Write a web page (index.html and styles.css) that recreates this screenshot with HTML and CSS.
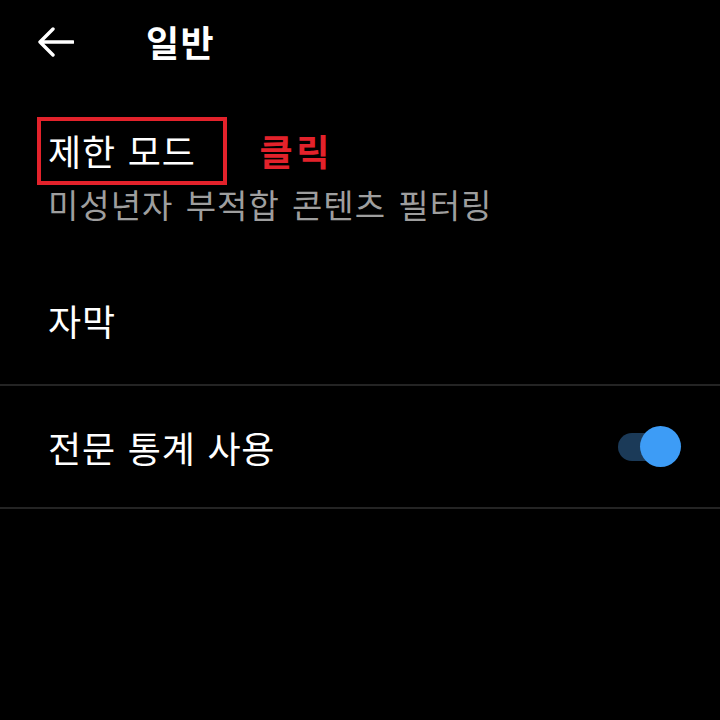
FILE: index.html
```html
<!DOCTYPE html>
<html lang="ko">
<head>
<meta charset="utf-8">
<link rel="stylesheet" href="styles.css">
</head>
<body>
<div class="screen">
  <header class="appbar">
    <svg class="back" viewBox="0 0 36 30" width="36" height="30">
      <path d="M2 15 H35 M15 2 L2 15 L15 28" fill="none" stroke="#fff" stroke-width="3.4" stroke-linecap="round" stroke-linejoin="round"/>
    </svg>
    <h1 class="title">일반</h1>
  </header>
  <section class="item item-first">
    <div class="item-title-row">
      <span class="item-title annotated">제한 모드<span class="mark"></span></span>
      <span class="click-label">클릭</span>
    </div>
    <div class="item-sub">미성년자 부적합 콘텐츠 필터링</div>
  </section>
  <section class="item item-plain">
    <span class="item-title">자막</span>
  </section>
  <div class="divider"></div>
  <section class="item item-toggle">
    <span class="item-title">전문 통계 사용</span>
    <span class="switch"><span class="knob"></span></span>
  </section>
  <div class="divider"></div>
</div>
</body>
</html>
```
FILE: styles.css
```css
html, body {
  margin: 0;
  padding: 0;
  background: #000;
}
body {
  width: 720px;
  height: 720px;
  overflow: hidden;
  font-family: "Noto Sans CJK KR", "Noto Sans", sans-serif;
  color: #fff;
}
.screen {
  display: flex;
  flex-direction: column;
}
.appbar {
  height: 84px;
  display: flex;
  align-items: center;
  padding-left: 38px;
  box-sizing: border-box;
}
.back {
  display: block;
  margin-top: -1px;
}
.title {
  margin: -2px 0 0 72px;
  font-size: 36px;
  font-weight: 700;
  line-height: 1;
  letter-spacing: 1.5px;
}
.item {
  padding-left: 48px;
  padding-right: 40px;
  box-sizing: border-box;
}
.item-first {
  padding-top: 44px;
  height: 176px;
}
.item-title-row {
  display: flex;
  align-items: center;
  height: 44px;
}
.item-title {
  font-size: 36px;
  line-height: 44px;
  letter-spacing: 0.8px;
  word-spacing: 1px;
}
.annotated {
  position: relative;
}
.mark {
  position: absolute;
  left: -11px;
  top: -11px;
  width: 190px;
  height: 68px;
  box-sizing: border-box;
  border: 4px solid #e3222b;
}
.click-label {
  margin-left: 64px;
  color: #e3222b;
  font-size: 36px;
  font-weight: 700;
  line-height: 44px;
  letter-spacing: 3.5px;
}
.item-sub {
  margin-top: 12px;
  font-size: 33px;
  line-height: 40px;
  color: #9e9e9e;
  letter-spacing: 1px;
  word-spacing: 2px;
}
.item-plain {
  height: 124px;
  display: flex;
  align-items: center;
  padding-bottom: 4px;
}
.divider {
  height: 2px;
  background: #242424;
}
.item-toggle {
  height: 121px;
  display: flex;
  align-items: center;
  justify-content: space-between;
}
.switch {
  position: relative;
  width: 62px;
  height: 28px;
  border-radius: 14px;
  background: #1b3a58;
}
.knob {
  position: absolute;
  right: -1px;
  top: -7px;
  width: 41px;
  height: 41px;
  border-radius: 50%;
  background: #3d9cf6;
}
```
